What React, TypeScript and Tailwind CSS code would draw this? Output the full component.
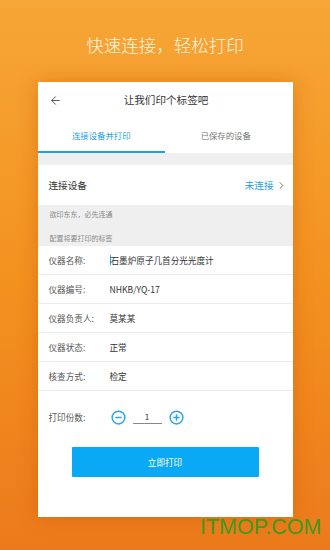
import { ChevronRight, ArrowLeft } from 'lucide-react'

const FONT = { fontFamily: '"Noto Sans CJK SC", "Noto Sans", sans-serif' }

const ROWS: { label: string; value: string; cursor?: boolean }[] = [
  { label: '仪器名称:', value: '石墨炉原子几首分光光度计', cursor: true },
  { label: '仪器编号:', value: 'NHKB/YQ-17' },
  { label: '仪器负责人:', value: '莫某某' },
  { label: '仪器状态:', value: '正常' },
  { label: '核查方式:', value: '检定' },
]

function CircleBtn({ plus }: { plus?: boolean }) {
  return (
    <svg width="15" height="15" viewBox="0 0 16 16" fill="none" stroke="#2aa4e8" strokeWidth="1.6">
      <circle cx="8" cy="8" r="6.8" />
      <path d="M4.6 8h6.8" />
      {plus && <path d="M8 4.6v6.8" />}
    </svg>
  )
}

export default function App() {
  return (
    <div
      className="relative w-[330px] h-[550px] overflow-hidden flex flex-col items-center bg-gradient-to-b from-[#f6a636] via-[#f3921f] to-[#ec7a1c]"
      style={FONT}
    >
      {/* 상단 문구 */}
      <div className="h-[82px] flex items-start pt-[33px] text-[17.5px] leading-[24px] font-light text-[#fff4e2]">
        快速连接，轻松打印
      </div>

      {/* 카드 */}
      <div className="w-[255px] h-[435px] bg-white flex flex-col shadow-[0_0_18px_rgba(205,85,0,0.45)]">
        {/* 헤더 */}
        <div className="h-[36px] flex items-center relative">
          <ArrowLeft className="absolute left-[11px] top-[12px] text-[#555]" size={13} strokeWidth={1.8} />
          <div className="flex-1 text-center text-[10.6px] text-[#333] pl-[2px]">让我们印个标签吧</div>
        </div>

        {/* 탭 */}
        <div className="h-[35px] flex">
          <div className="flex-1 flex flex-col">
            <div className="flex-1 flex items-center justify-center text-[8.4px] text-[#1e9fe6] pt-[1px]">连接设备并打印</div>
            <div className="h-[2px] bg-[#1e9fe6]" />
          </div>
          <div className="flex-1 flex flex-col">
            <div className="flex-1 flex items-center justify-center text-[8.4px] text-[#777] pt-[1px] pr-[6px]">已保存的设备</div>
            <div className="h-[2px] bg-white" />
          </div>
        </div>

        <div className="h-[12px] bg-[#efefef]" />

        {/* 연결 설비 */}
        <div className="h-[40px] flex items-center pl-[11px] pr-[6px]">
          <div className="flex-1 text-[9.6px] text-[#333]">连接设备</div>
          <div className="text-[9.6px] text-[#1e9fe6]">未连接</div>
          <ChevronRight className="text-[#666] ml-[2px]" size={11} strokeWidth={2} />
        </div>

        <div className="h-[41px] bg-[#efefef] flex flex-col pl-[12px] text-[7px] text-[#8a8a8a]">
          <div className="h-[18px] flex items-center">欲印东东，必先连通</div>
          <div className="h-[23px] flex items-end pb-[3px]">配置将要打印的标签</div>
        </div>

        {/* 항목 */}
        {ROWS.map((r) => (
          <div key={r.label} className="h-[29px] flex items-center pl-[11px] border-b border-[#ececec]">
            <div className="w-[61px] text-[8.6px] text-[#555]">{r.label}</div>
            <div className="flex items-center text-[8.6px] text-[#333]">
              {r.cursor && <span className="w-[1px] h-[10px] bg-[#1e9fe6]" />}
              {r.value}
            </div>
          </div>
        ))}

        {/* 인쇄 매수 */}
        <div className="h-[50px] flex items-center pl-[11px] pt-[2px]">
          <div className="w-[62px] text-[8.6px] text-[#555]">打印份数:</div>
          <CircleBtn />
          <div className="w-[29px] mx-[7px] border-b border-[#888] text-center text-[8px] text-[#333] leading-[12px] mt-[1px]">1</div>
          <CircleBtn plus />
        </div>

        <div className="flex justify-center mt-[6px]">
          <div className="w-[187px] h-[30px] bg-[#0aa9f5] rounded-[1px] flex items-center justify-center text-[8.6px] text-white">
            立即打印
          </div>
        </div>
      </div>

      {/* 워터마크 */}
      <div
        className="absolute left-[200px] top-[511px] text-[21.5px] text-[#3d9a1c]"
        style={{ fontFamily: '"Liberation Sans", Arial, sans-serif' }}
      >
        ITMOP.COM
      </div>
    </div>
  )
}
